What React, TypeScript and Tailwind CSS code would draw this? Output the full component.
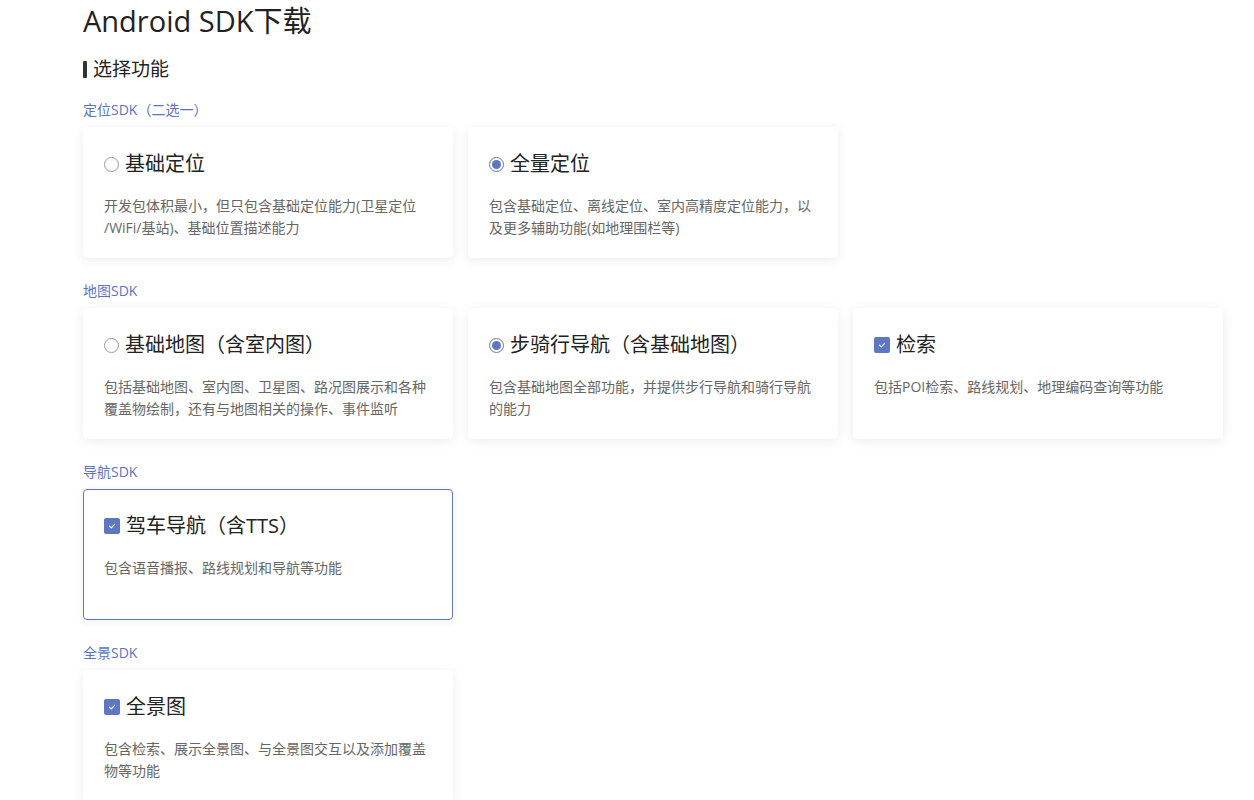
const sections = [
  {
    label: "定位SDK（二选一）",
    items: [
      {
        kind: "radio",
        checked: false,
        title: "基础定位",
        desc: "开发包体积最小，但只包含基础定位能力(卫星定位\u200B/WiFi/基站)、基础位置描述能力",
      },
      {
        kind: "radio",
        checked: true,
        title: "全量定位",
        desc: "包含基础定位、离线定位、室内高精度定位能力，以及更多辅助功能(如地理围栏等)",
      },
    ],
  },
  {
    label: "地图SDK",
    items: [
      {
        kind: "radio",
        checked: false,
        title: "基础地图（含室内图）",
        desc: "包括基础地图、室内图、卫星图、路况图展示和各种覆盖物绘制，还有与地图相关的操作、事件监听",
      },
      {
        kind: "radio",
        checked: true,
        title: "步骑行导航（含基础地图）",
        desc: "包含基础地图全部功能，并提供步行导航和骑行导航的能力",
      },
      {
        kind: "check",
        checked: true,
        title: "检索",
        desc: "包括POI检索、路线规划、地理编码查询等功能",
      },
    ],
  },
  {
    label: "导航SDK",
    items: [
      {
        kind: "check",
        checked: true,
        active: true,
        title: "驾车导航（含TTS）",
        desc: "包含语音播报、路线规划和导航等功能",
      },
    ],
  },
  {
    label: "全景SDK",
    items: [
      {
        kind: "check",
        checked: true,
        title: "全景图",
        desc: "包含检索、展示全景图、与全景图交互以及添加覆盖物等功能",
      },
    ],
  },
];

type Item = {
  kind: string;
  checked: boolean;
  active?: boolean;
  title: string;
  desc: string;
};

const Marker = ({ kind, checked }: { kind: string; checked: boolean }) => {
  if (kind === "check") {
    return (
      <span className="flex h-4 w-4 shrink-0 items-center justify-center rounded-[2px] bg-[#5f77c0]">
        <svg width="10" height="10" viewBox="0 0 10 10" fill="none">
          <path d="M2.4 5.2 L4.3 6.9 L7.6 3.4" stroke="white" strokeWidth="1.1" strokeLinecap="round" strokeLinejoin="round" />
        </svg>
      </span>
    );
  }
  return checked ? (
    <span className="flex h-[15px] w-[15px] shrink-0 items-center justify-center rounded-full border border-[#5f77c0] bg-white">
      <span className="h-[9px] w-[9px] rounded-full bg-[#5f77c0]" />
    </span>
  ) : (
    <span className="h-[15px] w-[15px] shrink-0 rounded-full border border-[#9a9a9a] bg-white" />
  );
};

const Card = ({ item }: { item: Item }) => (
  <div
    className={
      item.active
        ? "h-[131px] rounded-[4px] border border-[#5f77c0] bg-white px-5 pt-[22px] shadow-[0_2px_10px_rgba(0,0,0,0.06)]"
        : "h-[131px] rounded-[4px] border border-transparent bg-white px-5 pt-[22px] shadow-[0_2px_12px_rgba(0,0,0,0.08)]"
    }
  >
    <div className="flex h-7 items-center gap-[6px]">
      <Marker kind={item.kind} checked={item.checked} />
      <span className="text-[20px] leading-7 text-[#222]">{item.title}</span>
    </div>
    <p className="mt-[17px] text-[14px] leading-[22px] text-[#666]">{item.desc}</p>
  </div>
);

export default function App() {
  return (
    <div className="min-h-screen bg-white pl-[83px] font-['Open_Sans','Noto_Sans_CJK_SC',sans-serif]">
      <h1 className="pt-[4px] text-[29px] leading-[34px] text-[#222]">Android SDK下载</h1>
      <div className="mt-[19px] flex items-center gap-[6px]">
        <span className="h-[17px] w-[4px] rounded-[1px] bg-[#333]" />
        <span className="text-[19px] leading-6 text-[#222]">选择功能</span>
      </div>
      <div className="mt-[19px]">
        {sections.map((s, i) => (
          <section key={i} className={i === 0 ? "" : "mt-[23px]"}>
            <p className="mb-[7px] text-[14px] leading-5 text-[#5b73c7]">{s.label}</p>
            <div className="grid w-[1140px] grid-cols-3 gap-[15px]">
              {s.items.map((item, j) => (
                <Card key={j} item={item} />
              ))}
            </div>
          </section>
        ))}
      </div>
    </div>
  );
}
